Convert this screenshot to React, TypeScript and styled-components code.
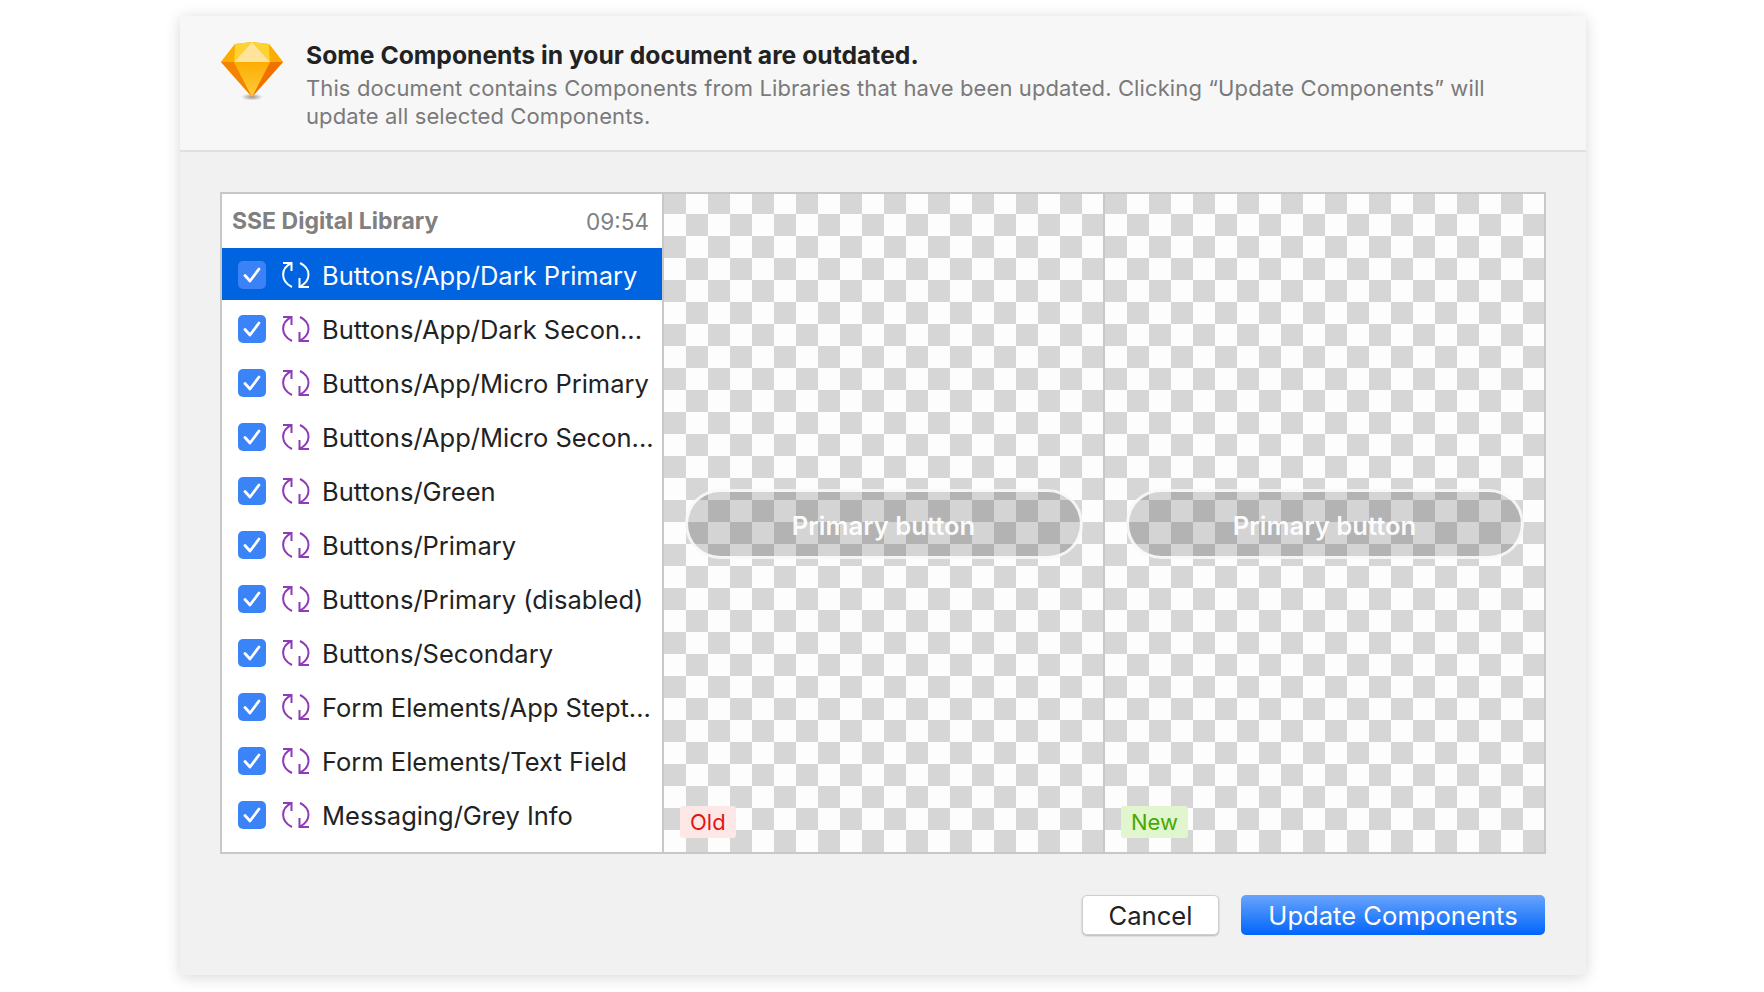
import React from 'react'
import styled, { createGlobalStyle } from 'styled-components'

const GlobalStyle = createGlobalStyle`
  html, body {
    margin: 0;
    background: #fff;
  }
  body {
    font-family: Inter, "Noto Sans", "Liberation Sans", sans-serif;
    -webkit-font-smoothing: antialiased;
  }
`

const Page = styled.div`
  width: 1764px;
  height: 992px;
  box-sizing: border-box;
  padding: 16px 178px 0 180px;
  overflow: hidden;
`

const Dialog = styled.div`
  height: 959px;
  background: #f1f1f1;
  box-shadow: 0 2px 14px rgba(0, 0, 0, 0.16);
  display: flex;
  flex-direction: column;
`

const Header = styled.header`
  height: 136px;
  flex: none;
  box-sizing: border-box;
  background: #f7f7f7;
  border-bottom: 2px solid #e0e0e0;
  display: flex;
  padding: 25px 80px 0 41px;
  gap: 23px;
`

const HeaderText = styled.div`
  display: flex;
  flex-direction: column;
`

const Title = styled.h1`
  margin: 0;
  font-size: 24.7px;
  line-height: 28px;
  font-weight: 700;
  color: #222;
`

const Message = styled.p`
  margin: 5px 0 0;
  font-size: 22px;
  line-height: 28px;
  letter-spacing: 0.11px;
  color: #7a7a7a;
`

const Body = styled.div`
  flex: 1;
  display: flex;
  flex-direction: column;
  padding: 40px 40px 0 40px;
`

const Panel = styled.div`
  height: 662px;
  box-sizing: border-box;
  border: 2px solid #c8c8c8;
  display: flex;
  background: #fff;
`

const List = styled.div`
  width: 440px;
  flex: none;
  display: flex;
  flex-direction: column;
  border-right: 2px solid #c8c8c8;
`

const ListHeader = styled.div`
  height: 54px;
  flex: none;
  box-sizing: border-box;
  display: flex;
  align-items: center;
  justify-content: space-between;
  padding: 0 13px 0 10px;
  color: #808080;
  font-size: 22.6px;
`

const LibraryName = styled.span`
  font-weight: 700;
  font-size: 23px;
`

const Row = styled.div<{ $selected?: boolean }>`
  height: 52px;
  flex: none;
  box-sizing: border-box;
  margin-bottom: 2px;
  padding: 2px 0 0 16px;
  display: flex;
  align-items: center;
  background: ${(p) => (p.$selected ? '#0064e1' : 'transparent')};
  color: ${(p) => (p.$selected ? '#fff' : '#222')};
`

const Checkbox = styled.span<{ $selected?: boolean }>`
  width: 28px;
  height: 28px;
  flex: none;
  border-radius: 5px;
  background: ${(p) => (p.$selected ? '#3b82f6' : '#3a84f8')};
  display: flex;
  align-items: center;
  justify-content: center;
`

const RowLabel = styled.span`
  margin-left: 12px;
  font-size: 25.5px;
  white-space: nowrap;
`

const Preview = styled.div`
  flex: 1;
  position: relative;
  display: flex;
  align-items: center;
  justify-content: center;
  padding-top: 2px;
  background: repeating-conic-gradient(#fdfdfd 0 25%, #d6d6d6 0 50%) 0 -2px / 44px 44px;

  & + & {
    border-left: 2px solid #c8c8c8;
  }
`

const Pill = styled.div`
  width: 398px;
  height: 70px;
  box-sizing: border-box;
  border: 3px solid rgba(255, 255, 255, 0.85);
  border-radius: 35px;
  background: rgba(0, 0, 0, 0.16);
  display: flex;
  align-items: center;
  justify-content: center;
  padding-top: 2px;
  color: rgba(255, 255, 255, 0.95);
  font-size: 25.6px;
  font-weight: 600;
`

const Tag = styled.span<{ $tone: 'old' | 'new' }>`
  position: absolute;
  left: 16px;
  bottom: 14px;
  height: 32px;
  padding: 0 10px;
  border-radius: 3px;
  display: flex;
  align-items: center;
  font-size: 22px;
  background: ${(p) => (p.$tone === 'old' ? '#fde8e8' : '#e1f6cf')};
  color: ${(p) => (p.$tone === 'old' ? '#e81313' : '#4aa800')};
`

const Footer = styled.div`
  display: flex;
  justify-content: flex-end;
  gap: 22px;
  margin: 41px 1px 0 0;
`

const CancelButton = styled.button`
  width: 137px;
  height: 40px;
  box-sizing: border-box;
  border: 1px solid #cfcfcf;
  border-radius: 5px;
  background: #fff;
  box-shadow: 0 1px 2px rgba(0, 0, 0, 0.25);
  font: 400 25.6px Inter, "Noto Sans", sans-serif;
  color: #222;
  padding: 0;
`

const PrimaryButton = styled.button`
  width: 304px;
  height: 40px;
  box-sizing: border-box;
  border: 0;
  border-radius: 5px;
  background: linear-gradient(#69a4fb, #0065fb);
  font: 400 25.6px Inter, "Noto Sans", sans-serif;
  color: #fff;
  padding: 0;
`

const LogoSvg = styled.svg`
  flex: none;
`

const SyncSvg = styled.svg`
  flex: none;
  margin-left: 16px;
`

const SketchLogo = () => (
  <LogoSvg width="62" height="62" viewBox="0 0 62 62">
    <defs>
      <radialGradient id="logoShadow">
        <stop offset="0%" stopColor="#000" stopOpacity="0.4" />
        <stop offset="100%" stopColor="#000" stopOpacity="0" />
      </radialGradient>
      <linearGradient id="logoCenter" x1="0" y1="0" x2="0" y2="1">
        <stop offset="0%" stopColor="#fdad00" />
        <stop offset="100%" stopColor="#ffcb3d" />
      </linearGradient>
    </defs>
    <ellipse cx="31" cy="56" rx="11" ry="3.5" fill="url(#logoShadow)" />
    <polygon points="14,3 31,1 48,3 62,21 31,56 0,21" fill="#fdad00" />
    <polygon points="14,3 31,1 13,21" fill="#fdd231" />
    <polygon points="48,3 31,1 49,21" fill="#fdd231" />
    <polygon points="31,1 13,21 49,21" fill="#fee39a" />
    <polygon points="0,21 14,3 13,21" fill="#fdad00" />
    <polygon points="62,21 48,3 49,21" fill="#fdad00" />
    <polygon points="0,21 13,21 31,56" fill="#f48400" />
    <polygon points="62,21 49,21 31,56" fill="#f07000" />
    <polygon points="13,21 49,21 31,56" fill="url(#logoCenter)" />
  </LogoSvg>
)

const CheckMark = () => (
  <svg width="20" height="18" viewBox="0 0 20 18" fill="none">
    <path
      d="M3 9.5 L8 15 L17 3"
      stroke="#fff"
      strokeWidth="2.8"
      strokeLinecap="round"
      strokeLinejoin="round"
    />
  </svg>
)

const SyncIcon = ({ color }: { color: string }) => (
  <SyncSvg width="28" height="28" viewBox="0 0 28 28" fill="none">
    <g stroke={color} strokeWidth="2">
      <path d="M1 2 H10 M9.5 1 V10" />
      <path d="M9.5 2 C-2 7.5 -1.5 20.5 10 26" />
      <path d="M18 2 C29.5 7.5 29.5 20.5 17 26" />
      <path d="M17 26 H27 M17.5 17 V27" />
    </g>
  </SyncSvg>
)

const items = [
  'Buttons/App/Dark Primary',
  'Buttons/App/Dark Secon...',
  'Buttons/App/Micro Primary',
  'Buttons/App/Micro Secon...',
  'Buttons/Green',
  'Buttons/Primary',
  'Buttons/Primary (disabled)',
  'Buttons/Secondary',
  'Form Elements/App Stept...',
  'Form Elements/Text Field',
  'Messaging/Grey Info',
]

export default function App() {
  return (
    <Page>
      <GlobalStyle />
      <Dialog>
        <Header>
          <SketchLogo />
          <HeaderText>
            <Title>Some Components in your document are outdated.</Title>
            <Message>
              This document contains Components from Libraries that have been updated. Clicking
              “Update Components” will update all selected Components.
            </Message>
          </HeaderText>
        </Header>
        <Body>
          <Panel>
            <List>
              <ListHeader>
                <LibraryName>SSE Digital Library</LibraryName>
                <span>09:54</span>
              </ListHeader>
              {items.map((item, i) => (
                <Row key={item} $selected={i === 0}>
                  <Checkbox $selected={i === 0}>
                    <CheckMark />
                  </Checkbox>
                  <SyncIcon color={i === 0 ? '#fff' : '#8e3bb8'} />
                  <RowLabel>{item}</RowLabel>
                </Row>
              ))}
            </List>
            <Preview>
              <Pill>Primary button</Pill>
              <Tag $tone="old">Old</Tag>
            </Preview>
            <Preview>
              <Pill>Primary button</Pill>
              <Tag $tone="new">New</Tag>
            </Preview>
          </Panel>
          <Footer>
            <CancelButton>Cancel</CancelButton>
            <PrimaryButton>Update Components</PrimaryButton>
          </Footer>
        </Body>
      </Dialog>
    </Page>
  )
}
